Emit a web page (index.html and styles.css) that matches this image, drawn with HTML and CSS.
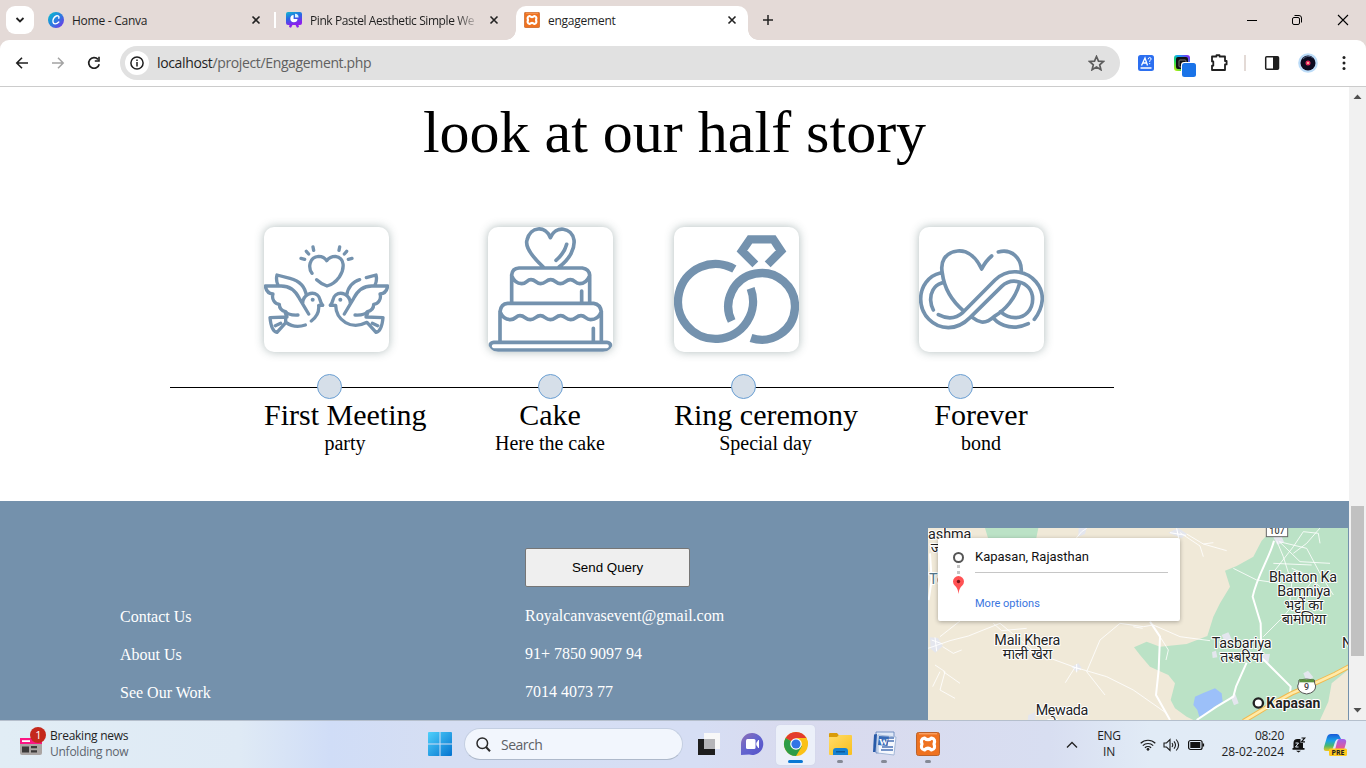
FILE: index.html
```html
<!DOCTYPE html>
<html lang="en">
<head>
<meta charset="utf-8">
<title>engagement</title>
<link rel="stylesheet" href="styles.css">
</head>
<body>
<svg class="defs" width="0" height="0">
  <defs>
    <linearGradient id="canva" x1="0" y1="0" x2="1" y2="1"><stop offset="0" stop-color="#00c4cc"/><stop offset=".5" stop-color="#2b7de0"/><stop offset="1" stop-color="#7d2ae8"/></linearGradient>
    <linearGradient id="slide" x1="0" y1="0" x2=".4" y2="1"><stop offset="0" stop-color="#12b8d0"/><stop offset=".5" stop-color="#2868e4"/><stop offset="1" stop-color="#8a20ee"/></linearGradient>
    <linearGradient id="win" x1="0" y1="0" x2="1" y2="1"><stop offset="0" stop-color="#4fd0fb"/><stop offset="1" stop-color="#0473cf"/></linearGradient>
    <linearGradient id="rainbow" x1="0" y1="1" x2="1" y2="0"><stop offset="0" stop-color="#d8f000"/><stop offset=".35" stop-color="#18d860"/><stop offset=".6" stop-color="#10a8f8"/><stop offset="1" stop-color="#9a10f0"/></linearGradient>
    <linearGradient id="chat" x1="0" y1="0" x2="1" y2="1"><stop offset="0" stop-color="#8f6fb5"/><stop offset=".5" stop-color="#6264cf"/><stop offset="1" stop-color="#5450c8"/></linearGradient>
    <linearGradient id="folder" x1="0" y1="0" x2="1" y2="1"><stop offset="0" stop-color="#ffdc6a"/><stop offset="1" stop-color="#f9bf1c"/></linearGradient>
    <linearGradient id="copA" x1="0" y1="0" x2="0" y2="1"><stop offset="0" stop-color="#1a58d8"/><stop offset=".4" stop-color="#18a4e8"/><stop offset=".7" stop-color="#4cb86a"/><stop offset="1" stop-color="#f0c820"/></linearGradient>
    <linearGradient id="copB" x1="0" y1="0" x2="0" y2="1"><stop offset="0" stop-color="#9c62ee"/><stop offset=".6" stop-color="#e0589c"/><stop offset="1" stop-color="#f58a58"/></linearGradient>
    <symbol id="xampp" viewBox="0 0 24 24"><rect x=".5" y=".5" width="23" height="23" rx="2" fill="#ef7220" stroke="#bb622b"/><path d="M3 1.800h18" stroke="#ffb27c" stroke-width="1"/><path d="M8.500 6Q12 9.500 15.500 6Q20 7 18 12Q20 17 15.500 18Q12 14.500 8.500 18Q4 17 6 12Q4 7 8.500 6z" fill="none" stroke="#fff" stroke-width="3.200" stroke-linejoin="round"/></symbol>
    <symbol id="close" viewBox="0 0 10 10"><path d="M1.500 1.500l7 7M8.500 1.500l-7 7" stroke="#222" stroke-width="1.600"/></symbol>
  </defs>
</svg>

<header class="tabs">
  <div class="tab-search"><svg width="10" height="6" viewBox="0 0 10 6"><path d="M1.500 1l3.500 3.500L8.500 1" fill="none" stroke="#222" stroke-width="1.800"/></svg></div>
  <div class="tab tab-home">
    <svg class="favicon" viewBox="0 0 16 16"><circle cx="8" cy="8" r="8" fill="url(#canva)"/><path d="M10.800 6.200c.8-2-1-3-2.700-2.200C5.800 5 4.500 8 5 10.200c.5 2.300 3.400 2.300 5.800-.2" fill="none" stroke="#fff" stroke-width="1.400" stroke-linecap="round"/></svg>
    <span class="tab-title">Home - Canva</span>
    <svg class="close"><use href="#close"/></svg>
  </div>
  <i class="tab-sep"></i>
  <div class="tab tab-pink">
    <svg class="favicon" viewBox="0 0 16 16"><path d="M4 11l-1 4 2 .8L7 12M12 11l1 4-2 .8L9 12" fill="#8a20ee"/><rect width="16" height="13" rx="2" fill="url(#slide)"/><path d="M7.600 3a3.600 3.600 0 1 0 3.900 3.900H7.600z" fill="#fff"/><path d="M9 1.800v3.600h3.600A3.600 3.600 0 0 0 9 1.800z" fill="#d9f2ff"/></svg>
    <span class="tab-title fade">Pink Pastel Aesthetic Simple We</span>
    <svg class="close"><use href="#close"/></svg>
  </div>
  <div class="tab tab-active">
    <svg class="favicon"><use href="#xampp"/></svg>
    <span class="tab-title">engagement</span>
    <svg class="close"><use href="#close"/></svg>
  </div>
  <svg class="plus" width="12" height="12" viewBox="0 0 12 12"><path d="M6 1v10M1 6h10" stroke="#222" stroke-width="1.500"/></svg>
  <div class="window-controls">
    <svg width="10" height="12" viewBox="0 0 10 12"><path d="M0 6.500h10" stroke="#000"/></svg>
    <svg width="12" height="12" viewBox="0 0 12 12" fill="none" stroke="#000"><rect x="1.500" y="3.500" width="7" height="7" rx="1.500"/><path d="M3.500 1.500H8a2.500 2.500 0 0 1 2.500 2.500v4.500"/></svg>
    <svg width="12" height="12" viewBox="0 0 12 12"><path d="M1 1l10 10M11 1L1 11" stroke="#000" stroke-width="1.100"/></svg>
  </div>
</header>

<nav class="toolbar">
  <svg class="nav" viewBox="0 0 14 14"><path d="M13 7H2M7 1.800L1.800 7 7 12.200" fill="none" stroke="#1f1f1f" stroke-width="1.600"/></svg>
  <svg class="nav" viewBox="0 0 14 14"><path d="M1 7h11M7 1.800L12.200 7 7 12.200" fill="none" stroke="#a3a3a3" stroke-width="1.500"/></svg>
  <svg class="nav" viewBox="0 0 14 14"><path d="M12.200 8.200A5.300 5.300 0 1 1 11 3.400" fill="none" stroke="#1f1f1f" stroke-width="1.700"/><path d="M12.800 .8v5H7.800V4.200h3.400V.8z" fill="#1f1f1f"/></svg>
  <div class="omnibox">
    <span class="info"><svg width="14" height="14" viewBox="0 0 14 14"><circle cx="7" cy="7" r="6.100" fill="none" stroke="#1f1f1f" stroke-width="1.500"/><path d="M7 6v4.500M7 3.500v1.500" stroke="#1f1f1f" stroke-width="1.500"/></svg></span>
    <span class="url"><b>localhost</b>/project/Engagement.php</span>
    <svg class="star" width="17" height="16" viewBox="0 0 17 16"><path d="M8.500 1.500l2 4.600 5 .4-3.800 3.300 1.200 4.900-4.400-2.600-4.400 2.600 1.200-4.900L1.500 6.500l5-.4z" fill="none" stroke="#5c5c5c" stroke-width="1.700"/></svg>
  </div>
  <div class="extensions">
    <svg viewBox="0 0 22 22"><rect x="3" y="3" width="16" height="16" rx="2.500" fill="#2c6ff0"/><path d="M6.500 13.500L10 6l2.500 7.500M8 11h4M5.500 16h11" fill="none" stroke="#fff" stroke-width="1.300"/><path d="M13.200 7.300q0-1.700 1.500-1.700t1.400 1.500q0 .9-1.400 1.600v1.200M14.700 11v1.200" fill="none" stroke="#fff"/></svg>
    <svg viewBox="0 0 22 22"><rect x="3" y="3" width="16" height="16" rx="3" fill="url(#rainbow)"/><rect x="5" y="5" width="12" height="12" rx="2" fill="#101014"/><rect x="8" y="8" width="7" height="7" rx="1" fill="none" stroke="#777"/><rect x="10" y="10" width="15" height="15" rx="3" fill="#fff"/><rect x="11" y="11" width="14" height="14" rx="2.500" fill="#1a73e8"/></svg>
    <svg viewBox="0 0 22 22"><path d="M4 4.500h4.500v-1.300h3v1.300H17v4.500h1.600v3.400H17V18H4v-4.300h1.300v-4.300H4z" fill="none" stroke="#1f1f1f" stroke-width="1.800" stroke-linejoin="round"/></svg>
    <i></i>
    <svg viewBox="0 0 22 22"><rect x="4.700" y="4.700" width="12.800" height="12.600" rx="1" fill="#fff" stroke="#1f1f1f" stroke-width="1.500"/><path d="M12 5h5.500v12H12z" fill="#1f1f1f"/></svg>
    <svg viewBox="0 0 22 22"><circle cx="11" cy="11" r="9.800" fill="#bcdcf8"/><circle cx="11" cy="11" r="7.500" fill="#0c0b20"/><path d="M6 7a7 7 0 0 1 10-1" stroke="#506080" fill="none"/><circle cx="11" cy="11" r="2.500" fill="#e32960"/><circle cx="11" cy="11" r="1" fill="#ffd09a"/></svg>
    <svg viewBox="0 0 22 22" fill="#1f1f1f"><circle cx="11" cy="5.500" r="1.500"/><circle cx="11" cy="11" r="1.500"/><circle cx="11" cy="16.500" r="1.500"/></svg>
  </div>
</nav>

<div class="viewport">
  <main class="page">
    <h1>look at our half story</h1>
    <section class="timeline">
      <article class="event first">
        <svg class="picture" viewBox="42 36 375 375" stroke-width="10">
          <path d="M186 175C174 158 177 126 206 124Q222 124 230 137Q240 124 256 124C286 128 284 162 268 186Q252 208 231 213Q215 208 200 194M153 130l11 3M169 109l7 8M189 96l2 10M269 96l-2 10M290 109l-7 8M306 130l-11 3"/>
          <path d="M84 210C78 198 79 188 81 180L120 190C150 198 166 218 169 242M176 297L148 250C132 218 110 212 90 213H46C48 228 54 236 69 237C64 252 74 266 88 268C88 280 96 288 107 290C112 298 122 301 144 300M158 264C160 238 186 228 202 240C213 248 208 262 218 271H206C208 290 200 306 184 318M166 330C145 337 125 335 108 322L81 352C68 350 62 330 60 308L111 306L106 294M76 332l16-7M107 307v16"/>
          <path d="M375 210C381 198 380 188 378 180L349 188M329 194C308 200 293 218 290 242M283 297L311 250C327 218 349 212 369 213H413C411 228 405 236 390 237C395 252 385 266 371 268C371 280 363 288 352 290C347 298 337 301 315 300M301 264C299 238 273 228 257 240C246 248 251 262 241 271H257C258 317 304 346 351 322L378 352C391 350 397 330 399 308L348 306L353 294M383 332l-16-7"/>
          <g fill="#7492ae" stroke="none"><circle cx="188" cy="254" r="6"/><circle cx="271" cy="254" r="6"/></g>
        </svg>
        <i class="dot"></i><h2>First Meeting</h2><p>party</p>
      </article>
      <article class="event second">
        <svg class="picture" viewBox="39 36 375 375" stroke-width="11">
          <path d="M205 156C166 120 150 95 156 75C166 34 212 30 226 68C242 30 290 36 297 75C300 100 285 132 252 156M275 88Q268 115 243 136M110 262V180Q112 160 132 159H322Q342 162 344 180V262M110 182C118 202 130 206 140 206C155 206 155 194 168 194C182 194 184 206 197 206C212 206 213 194 227 194C241 194 243 206 256 206C270 206 272 194 286 194C300 194 300 206 314 206C328 206 336 200 344 182M320 228V262M75 378V290Q78 266 98 265H356Q376 268 379 290V378M75 290C82 308 92 314 106 314C122 314 122 302 135 302C150 302 151 314 166 314C181 314 182 302 196 302C210 302 211 314 226 314C241 314 242 302 257 302C271 302 272 314 287 314C302 314 303 302 318 302C332 302 332 314 347 314C362 314 372 308 379 290M355 340V378"/>
          <rect x="45" y="382" width="362" height="23" rx="11"/>
        </svg>
        <i class="dot"></i><h2>Cake</h2><p>Here the cake</p>
      </article>
      <article class="event third">
        <svg class="picture rings" viewBox="42 36 375 375" stroke-width="25">
          <path d="M223 162A112.500 112.500 0 1 0 272 220M215 318A100 100 0 1 1 273 369M286 148L246 108L270 73H340L363 108L323 148"/>
        </svg>
        <i class="dot"></i><h2>Ring ceremony</h2><p>Special day</p>
      </article>
      <article class="event fourth">
        <svg class="picture" viewBox="42 36 375 375" stroke-width="11">
          <path d="M260 123Q242 138 230 162C215 130 190 105 158 108C120 112 105 140 112 175C118 225 145 262 177 289M280 111C320 100 350 130 349 168M106 174C70 182 47 215 47 252C47 300 85 338 130 338C155 338 178 325 195 308L290 214C305 200 322 196 340 200C365 205 383 225 383 252C383 285 360 308 330 308C312 308 300 302 286 290M110 204C85 212 76 235 77 256Q78 272 85 285M100 299C125 312 152 312 174 292L270 195C290 176 315 168 340 171C385 178 412 215 412 252Q410 285 388 313M264 308C290 337 330 345 370 326M344 204C332 250 300 285 268 304C255 316 240 322 230 321Q215 318 203 308"/>
        </svg>
        <i class="dot"></i><h2>Forever</h2><p>bond</p>
      </article>
    </section>

    <footer class="footer">
      <ul class="links"><li>Contact Us</li><li>About Us</li><li>See Our Work</li></ul>
      <div class="contact">
        <button>Send Query</button>
        <ul><li>Royalcanvasevent@gmail.com</li><li>91+ 7850 9097 94</li><li>7014 4073 77</li></ul>
      </div>
      <div class="map">
        <svg class="map-canvas" viewBox="24 24 1260 576">
          <path fill="#f0e9d8" d="M24 24h1260v576H24z"/>
          <path fill="#bbe2c6" d="M195 24l12 40h140l8-40zM1062 24L1025 62 1000 110 950 138 915 152 930 200 900 250 880 290 862 348 800 372 720 380 680 365 642 382 660 405 690 440 745 465 765 490 752 540 765 565 800 590 820 600H1200L1225 545 1235 490 1284 450V24z"/>
          <path fill="#9cc0f9" d="M848 520L885 505 905 520 908 545 880 562 865 580 838 590 832 570 820 555 825 530z"/>
          <g fill="#e4e6ee"><path d="M30 352l24 2 14 24-22 20-14-12zM476 24h24l-5 18-20 8zM745 38l30-14 26 18-16 12zM455 440l20-10 10 14-16 12zM905 345l20-8 10 20-20 10zM1030 402h20l-5 26-24-4zM1150 460l14-8 16 20-20 12zM932 530l14-8 10 28-14 6zM876 396l12-4 4 20-14 2zM1060 52l24-4 8 18-20 8zM325 585l20-8v23h-22z"/></g>
          <g fill="none" stroke="#fff" stroke-linejoin="round">
            <path stroke-width="6" d="M1062 62C1050 110 1010 170 998 230L1022 310 1024 412 1112 500 1110 520M980 428L948 500 940 530 890 560 830 600M26 240L35 180 30 100M690 305L720 350 716 450 708 525 750 600"/>
            <path stroke-width="2.500" d="M24 385L90 362 145 348 240 310 350 400 465 442 560 470 640 510 740 580M436 488L465 442M500 455L540 360 600 310 670 320 700 315 780 350 870 362M500 455L555 525M220 310L245 332 320 325M60 350L130 295M68 380L100 400 125 390M45 435L75 455 60 510 105 535M60 455L38 500M70 455L120 490M780 38L840 78 850 110M800 42L850 72 920 92M850 72L880 68M720 350L745 390 738 420M640 320L668 325M940 145L1010 180 1080 190M1070 62L1090 110 1115 190 1110 240M1120 100L1160 70 1200 24M1078 65L1160 85 1200 160 1240 225M1115 145L1150 160 1200 200M1078 65L1140 125 1230 130M1030 350L1090 290 1180 180M1150 35L1120 80 1050 170M1060 130L1175 135M1150 35L1195 40 1200 70M460 65L485 35 500 25"/>
            <path stroke="#fff" stroke-width="3" d="M35 360l33 12M45 352l5 42M750 38l48 8M770 25l6 30M455 440l28 8M470 432v25"/>
          </g>
          <path d="M970 604L1060 550 1115 520 1180 492 1245 462 1290 438" fill="none" stroke="#f3b94d" stroke-width="14"/><path d="M970 604L1060 550 1115 520 1180 492 1245 462 1290 438" fill="none" stroke="#ffeaa8" stroke-width="8"/>
          <rect x="1039" y="10" width="64" height="40" fill="#fff" stroke="#666" stroke-width="3"/><text x="1071" y="43" class="route">107</text>
          <path d="M1137 480q22-6 46 0 0 10 4 18 0 20-27 24-27-4-27-24 4-8 4-18z" fill="#fff" stroke="#555" stroke-width="3"/><path d="M1138 478h44v9h-44z" fill="#5b9341"/><text x="1160" y="510" class="route">9</text>
          <g class="place">
            <text x="89" y="57">ashma</text><text x="48" y="98">ज</text><text x="50" y="193" class="te">Te</text>
            <text x="322" y="376" textLength="198">Mali Khera</text><text x="322" y="416" textLength="148">माली खेरा</text>
            <text x="426" y="586" textLength="158">Mewada</text><text x="398" y="626">मे</text>
            <text x="1149" y="187" textLength="204">Bhatton Ka</text><text x="1152" y="229" textLength="160">Bamniya</text><text x="1151" y="269" textLength="116">भट्टों का</text><text x="1151" y="311" textLength="134">बामणिया</text>
            <text x="965" y="385" textLength="180">Tasbariya</text><text x="965" y="425" textLength="128">तस्बरिया</text><text x="1281" y="385">N</text>
            <text x="1120" y="564" textLength="162" class="bold">Kapasan</text>
          </g>
          <circle cx="1015" cy="549" r="14" fill="#fff" stroke="#222" stroke-width="7"/>
        </svg>
        <div class="directions">
          <svg width="14" height="48" viewBox="0 0 14 48"><circle cx="7.500" cy="7.500" r="4.500" fill="#fff" stroke="#555" stroke-width="2"/><path d="M6 15h3v3H6zM6 21h3v3H6z" fill="#c5c5c5"/><path d="M7.500 44Q7 38 3.700 35.500A5.500 5.500 0 1 1 11.300 35.500Q8 38 7.500 44z" fill="#ff5254"/><circle cx="7.500" cy="31.500" r="1.700" fill="#7a1518"/></svg>
          <div class="fields"><span class="from">Kapasan, Rajasthan</span><span class="more">More options</span></div>
        </div>
      </div>
    </footer>
  </main>
  <div class="scrollbar">
    <svg width="9" height="5" viewBox="0 0 9 5"><path d="M.5 5L4.500 .5 8.500 5z" fill="#505050"/></svg>
    <i class="thumb"></i>
    <svg width="9" height="5" viewBox="0 0 9 5"><path d="M.5 0L4.500 4.500 8.500 0z" fill="#505050"/></svg>
  </div>
</div>

<div class="taskbar">
  <div class="news">
    <svg width="28" height="30" viewBox="0 0 28 30"><rect x="1" y="12" width="22" height="17" rx="2" fill="#aaa5a3"/><path d="M1 12h22v6H1z" fill="#fb1583"/><path d="M3 14.200h8v1.800H3z" fill="#fff"/><path d="M3 20.500h7v6H3zM12 20h6v2.300h-6zM12 24.300h6v2.300h-6z" fill="#3b3938"/><circle cx="19" cy="9" r="8" fill="#c4281c"/><text x="19.500" y="13" class="badge">1</text></svg>
    <div class="two-lines"><span>Breaking news</span><span class="muted">Unfolding now</span></div>
  </div>
  <svg class="start" width="24" height="24" viewBox="0 0 24 24"><path d="M1 0h10.500v11.500H0V1q0-1 1-1zM12.500 0H23q1 0 1 1v10.500H12.500zM0 12.500h11.500V24H1q-1 0-1-1zM12.500 12.500H24V23q0 1-1 1H12.500z" fill="url(#win)"/></svg>
  <div class="search"><svg width="15" height="15" viewBox="0 0 15 15"><circle cx="6.300" cy="6.300" r="5.300" fill="none" stroke="#2a2a2a" stroke-width="1.500"/><path d="M10 10l4 4.300" stroke="#2a2a2a" stroke-width="2"/></svg><span>Search</span></div>
  <div class="apps">
    <div class="app"><svg viewBox="0 0 26 26"><path d="M9 2h16v16H9z" fill="#f8f8f8"/><path d="M3 8h17v16H3z" fill="#1e1e1e"/><path d="M9 8h11v10H9z" fill="#b5b5b8"/></svg></div>
    <div class="app"><svg viewBox="0 0 26 26"><path d="M13 2a11 11 0 1 1-3 21.500L2 24V13A11 11 0 0 1 13 2z" fill="url(#chat)"/><rect x="7" y="8" width="9.500" height="10" rx="1.500" fill="#fff"/><path d="M17.300 12l2-3h.7v8h-.7l-2-3z" fill="#fff"/></svg></div>
    <div class="app current"><svg viewBox="0 0 26 26"><circle cx="13" cy="13" r="12" fill="#fbc116"/><path d="M13 13L2.600 7A12 12 0 0 1 23.400 7z" fill="#e33b2e"/><path d="M13 13L2.600 7A12 12 0 0 0 13 25l6-10z" fill="#2d9c48"/><path d="M13 7h10.400q3 6-1 11z" fill="#fbc116"/><circle cx="13" cy="13" r="5.800" fill="#fff"/><circle cx="13" cy="13" r="4.600" fill="#3275e6"/></svg></div>
    <div class="app open"><svg viewBox="0 0 26 26"><path d="M2 3q0-1 1-1h7l2 2.500L10 8H2z" fill="#d99b08"/><path d="M2 6h8l2-2h12q1 0 1 1v18q0 1-1 1H3q-1 0-1-1z" fill="url(#folder)"/><path d="M6 24v-4q0-3 3-3h9q3 0 3 3v4z" fill="#1682d2"/><path d="M9 20h9v1.500H9z" fill="#0b5a9c"/></svg></div>
    <div class="app open"><svg viewBox="0 0 26 26"><path d="M5 1h18v20l-18 1z" fill="#dfe8f7" stroke="#5b7fb8" stroke-width=".8"/><path d="M7 4l18 2-2 18-16-2z" fill="#f5f8fe" stroke="#a4b8d8"/><path d="M17 7h6M17 10h6M11 16h11M10 19h12" stroke="#4b73b5" stroke-width="1.300"/><path d="M3 3.500l3-.5-1.500 18L2 21z" fill="#285aa8"/><path d="M8 5l10 .5-1.500 9.500L7 14z" fill="#386bb7"/><text x="12.500" y="13.500" class="word">W</text></svg></div>
    <div class="app open"><svg viewBox="0 0 26 26"><use href="#xampp" x="1" y="1" width="24" height="24"/></svg></div>
  </div>
  <div class="tray">
    <svg width="12" height="8" viewBox="0 0 12 8"><path d="M1 6.500l5-5 5 5" fill="none" stroke="#222" stroke-width="1.300"/></svg>
    <div class="two-lines lang"><span>ENG</span><span>IN</span></div>
    <svg class="wifi" width="16" height="14" viewBox="0 0 16 14" fill="none" stroke="#1c1c1c"><path d="M.7 5.200a10.500 10.500 0 0 1 14.600 0M2.800 7.600a7.500 7.500 0 0 1 10.400 0M4.900 9.800a4.500 4.500 0 0 1 6.200 0" stroke-width="1.200"/><circle cx="8" cy="11.300" r="1" fill="#1c1c1c"/></svg>
    <svg class="sound" width="18" height="14" viewBox="0 0 18 14" fill="none" stroke="#1c1c1c" stroke-width="1.100"><path d="M1 5h2.500L7 1.500v11L3.500 9H1zM9 5q1.500 2 0 4M11 3.300q3 3.700 0 7.400M13.200 1.500q4.800 5.500 0 11"/></svg>
    <svg width="17" height="12" viewBox="0 0 17 12"><rect x=".6" y="1.500" width="13.500" height="9" rx="2" fill="none" stroke="#111" stroke-width="1.200"/><rect x="2.300" y="3" width="10" height="6" fill="#111"/><path d="M15.300 4.500v3" stroke="#111" stroke-width="1.600"/></svg>
    <div class="two-lines clock"><span>08:20</span><span>28-02-2024</span></div>
    <svg class="bell" width="14" height="16" viewBox="0 0 14 16"><path d="M1.500 11.500V6a4 4 0 0 1 4-4h3v4h2.500v5.500zM.5 11h12v1.800H.5zM4 13.800h5L6.500 15.500z" fill="#111"/><path d="M3.500 6h3l-3 4h3" fill="none" stroke="#e2eaf5"/><path d="M9.500 1h3.300L9.500 4.800h3.500" fill="none" stroke="#111" stroke-width="1.200"/></svg>
    <svg class="copilot" width="24" height="24" viewBox="0 0 24 24"><path d="M8 1h6q2 0 3 3l1 2h-3q-2 0-3 3l-2 6q-1 3-3 3H3Q0 18 1 14L4 4q1-3 4-3z" fill="url(#copA)"/><path d="M16 6h4q4 0 3 4l-2 7q-1 3-4 3H9q2 0 3-3l2-8q1-3 2-3z" fill="url(#copB)"/><rect x="6" y="15.500" width="18" height="7.500" rx="1.500" fill="#ffc91f"/><text x="15" y="22" class="pre">PRE</text></svg>
  </div>
</div>
</body>
</html>
```
FILE: styles.css
```css
* { box-sizing: border-box; }
body { margin: 0; width: 1366px; height: 768px; overflow: hidden; display: flex; flex-direction: column; background: #e4dad7; font-family: "Open Sans", "Noto Sans", sans-serif; color: #1f1f1f; }
.defs { position: absolute; }
svg { flex: none; display: block; }

/* browser tabs */
.tabs { height: 40px; flex: none; display: flex; align-items: center; padding-left: 6px; font-size: 12px; }
.tab-search { width: 28px; height: 28px; border-radius: 9px; background: #fff; display: grid; place-items: center; }
.tab { display: flex; align-items: center; gap: 8px; height: 34px; align-self: flex-end; padding: 0 12px 6px 14px; }
.favicon { width: 16px; height: 16px; }
.close { width: 10px; height: 10px; margin-left: auto; }
.tab-title { white-space: nowrap; overflow: hidden; letter-spacing: -0.25px; }
.tab-home { width: 239px; }
.tab-sep { width: 2px; height: 16px; background: #fff; margin-left: 1px; }
.tab-pink { width: 240px; padding-left: 10px; padding-right: 17px; }
.fade { width: 170px; margin-right: -4px; letter-spacing: -.42px; -webkit-mask-image: linear-gradient(90deg, #000 86%, transparent); mask-image: linear-gradient(90deg, #000 86%, transparent); }
.tab-active { width: 232px; background: #fff; border-radius: 10px 10px 0 0; padding-left: 8px; padding-right: 11px; position: relative; }
.tab-active::before, .tab-active::after { content: ""; position: absolute; bottom: 0; width: 10px; height: 10px; }
.tab-active::before { left: -10px; background: radial-gradient(circle at 0 0, transparent 9.5px, #fff 10px); }
.tab-active::after { right: -10px; background: radial-gradient(circle at 100% 0, transparent 9.5px, #fff 10px); }
.plus { margin-left: 14px; }
.window-controls { margin-left: auto; padding-right: 17px; display: flex; gap: 34px; align-items: center; }

/* address bar */
.toolbar { height: 47px; flex: none; display: flex; align-items: center; background: #fff; border-bottom: 1px solid #ccc; border-radius: 9px 9px 0 0; padding-left: 15px; }
.nav { width: 14px; height: 14px; margin-right: 22px; }
.omnibox { width: 1000px; flex: none; height: 34px; margin-left: -3px; border-radius: 17px; background: #e1e1e1; display: flex; align-items: center; padding: 0 15px 0 5px; }
.info { width: 24px; height: 24px; background: #fff; border-radius: 50%; display: grid; place-items: center; }
.url { margin-left: 8px; font-size: 14px; line-height: 18px; padding-bottom: 1px; letter-spacing: -.36px; color: #606060; }
.url b { font-weight: 400; color: #1f1f1f; }
.star { margin-left: auto; }
.extensions { flex: none; display: flex; align-items: center; padding-left: 15px; }
.extensions svg { width: 22px; height: 22px; margin-right: 14px; overflow: visible; }
.extensions svg:nth-child(2) { margin-right: 15px; }
.extensions i { width: 2px; height: 16px; background: #e3dad6; margin: 0 15px 0 0; }
.extensions svg:last-child { margin-right: 0; }

/* web page */
.viewport { height: 633px; flex: none; display: flex; }
.page { width: 1349px; background: #fff; overflow: hidden; font-family: "Liberation Serif", serif; color: #000; display: flex; flex-direction: column; }
h1 { margin: 0; padding-top: 11px; font-size: 60px; line-height: 69px; font-weight: 400; text-align: center; height: 140px; }
.timeline { margin-left: 170px; width: 944px; height: 274px; padding-left: 94px; display: flex; gap: 61px; background: linear-gradient(#000, #000) 0 160px / 944px 1px no-repeat; }
.event { flex: none; }
.first { width: 163px; }
.second, .fourth { width: 125px; }
.third { width: 184px; }
.picture { width: 125px; height: 125px; border-radius: 10px; background: #fff; box-shadow: 0 0 10px rgba(47, 79, 79, .38); fill: none; stroke: #7492ae; stroke-linecap: round; stroke-linejoin: round; }
.rings { stroke-linecap: butt; stroke-linejoin: miter; }
.dot { display: block; width: 25px; height: 25px; margin: 22px 0 0 53px; border: 1px solid #6a9fd3; border-radius: 50%; background: #d6dfe9; }
.second .dot { margin-left: 50px; }
.third .dot { margin-left: 57px; }
.fourth .dot { margin-left: 29px; }
.event h2, .event p { margin: 0 1px 0 0; text-align: center; font-weight: 400; white-space: nowrap; }
.event h2 { font-size: 30px; line-height: 32px; }
.event p { font-size: 20px; line-height: 24px; }
.footer { height: 219px; background: #7491ac; color: #fff; font-size: 16px; display: flex; }
.footer ul { list-style: none; margin: 0; padding: 0; }
.footer li { height: 38px; line-height: 18px; white-space: nowrap; }
.links { width: 405px; }
.footer .links { margin-left: 120px; padding-top: 107px; }
.contact { width: 403px; padding-top: 47px; }
.contact button { display: block; width: 165px; height: 39px; margin: 0 0 20px; border: 1px solid #767676; border-radius: 2px; background: #efefef; color: #000; font: 13.333px "Liberation Sans", sans-serif; }
.map { width: 420px; height: 192px; margin-top: 27px; position: relative; overflow: hidden; font-family: Roboto, sans-serif; }
.map-canvas { width: 420px; height: 192px; }
.place { font: 43px Roboto, "Noto Sans", sans-serif; fill: #222; text-anchor: middle; paint-order: stroke; stroke: #fff; stroke-width: 6px; stroke-linejoin: round; }
.place .bold { font-weight: 700; font-size: 42px; }
.place .te { fill: #527589; }
.route { font: 500 27px Roboto, sans-serif; text-anchor: middle; fill: #444; }
.directions { position: absolute; left: 10px; top: 10px; width: 242px; height: 83px; background: #fff; border-radius: 2px; box-shadow: 0 1px 4px rgba(0, 0, 0, .3); padding: 12px 12px 0 13px; display: flex; gap: 10px; }
.fields { width: 193px; display: flex; flex-direction: column; }
.from { height: 23px; line-height: 13px; font-size: 13px; color: #111; border-bottom: 1px solid #c6c6c6; }
.more { margin-top: 24px; line-height: 13px; font-size: 11px; color: #3a76e0; }

/* scrollbar */
.scrollbar { width: 17px; background: #f1f1f1; display: flex; flex-direction: column; align-items: center; padding: 7px 0; }
.thumb { width: 13px; height: 151px; margin: 407px 0 52px; background: #c1c1c1; }

/* taskbar */
.taskbar { height: 48px; flex: none; border-top: 1px solid #b5bfcc; background: linear-gradient(90deg, #e1edf5 0, #dfeaf5 240px, #d0ddf7 330px, #d5def3 430px, #d6def4 700px, #d9daee 800px, #d8def1 1050px, #e1ebf6 1150px, #e2ebf6 100%); display: flex; align-items: center; font-size: 12px; }
.news { width: 428px; padding-left: 19px; display: flex; gap: 3px; }
.news > svg { margin: -2px 0 0; }
.badge { font-size: 11px; fill: #fff; text-anchor: middle; }
.two-lines { display: flex; flex-direction: column; line-height: 16px; padding-bottom: 2px; letter-spacing: -.25px; }
.muted { color: #5c646d; }
.start { margin-bottom: 1px; }
.search { width: 219px; height: 32px; margin: 0 0 1px 12px; border-radius: 16px; border: 1px solid #c4cfe2; border-bottom-color: #aeb9cb; background: #f2f6fd; padding-left: 11px; display: flex; align-items: center; gap: 10px; font-size: 14px; color: #5d6065; letter-spacing: -.5px; }
.apps { display: flex; gap: 5px; margin-left: 5px; }
.app { width: 39px; height: 40px; border-radius: 4px; padding-top: 6px; display: flex; flex-direction: column; align-items: center; }
.app svg { width: 26px; height: 26px; }
.app.open::after, .app.current::after { content: ""; width: 6px; height: 3px; margin-top: 3px; border-radius: 2px; background: #858a96; }
.app.current { background: #ecf0f9; box-shadow: 0 0 1px #bcc6da; }
.app.current::after { width: 15px; background: #0a78d4; }
.word { font: 700 9px "Liberation Serif", serif; fill: #fff; text-anchor: middle; }
.tray { margin-left: auto; padding-right: 19px; display: flex; align-items: center; }
.lang { width: 26px; margin-left: 18px; align-items: center; }
.wifi { margin-left: 18px; }
.sound { margin: 0 7px; }
.clock { width: 66px; margin-left: 13px; text-align: right; letter-spacing: 0; white-space: nowrap; align-items: flex-end; }
.clock span:first-child { letter-spacing: -.3px; }
.bell { margin-left: 8px; }
.copilot { margin-left: 17px; }
.pre { font: 700 7px "Open Sans", sans-serif; fill: #222; text-anchor: middle; }
```
